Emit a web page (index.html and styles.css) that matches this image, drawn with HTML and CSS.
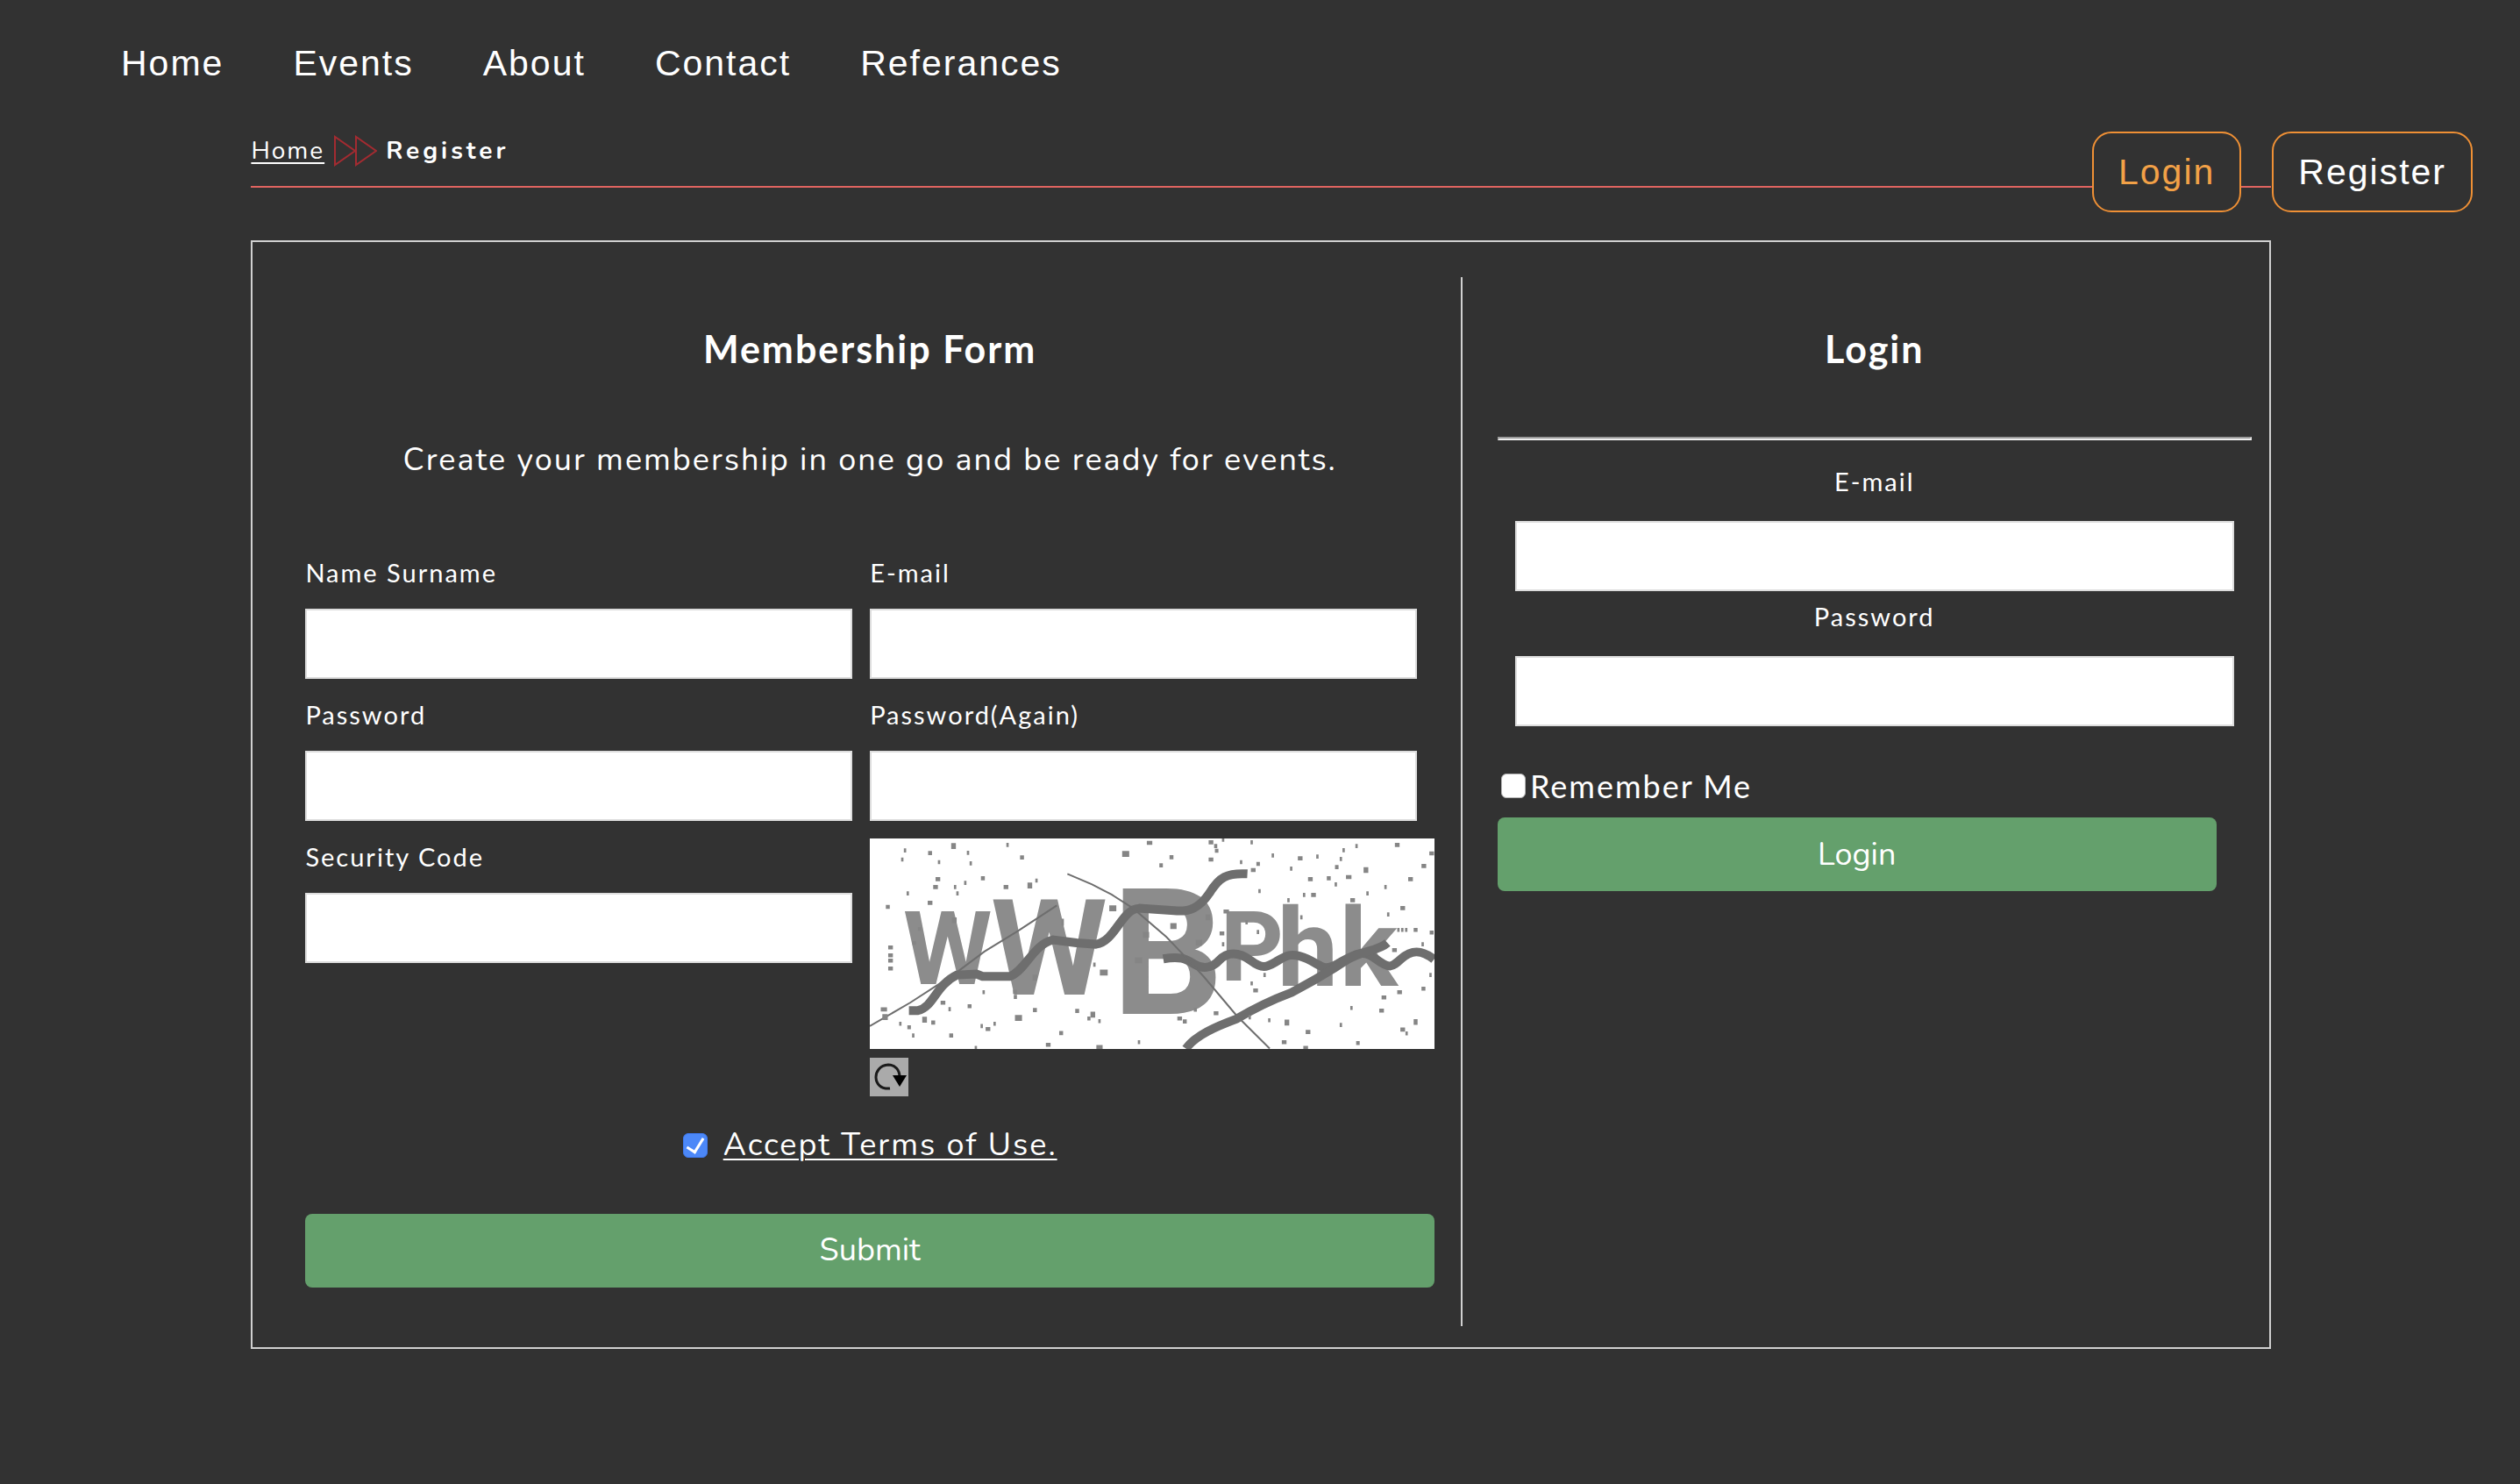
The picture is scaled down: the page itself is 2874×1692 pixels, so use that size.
FILE: index.html
```html
<!DOCTYPE html>
<html lang="en">
<head>
<meta charset="utf-8">
<title>Register</title>
<link rel="stylesheet" href="styles.css">
</head>
<body>
<header class="site-header">
  <nav class="main-nav">
    <a href="#">Home</a>
    <a href="#">Events</a>
    <a href="#">About</a>
    <a href="#">Contact</a>
    <a href="#">Referances</a>
  </nav>
  <div class="account-links">
    <a class="account-link account-link-active" href="#">Login</a>
    <a class="account-link" href="#">Register</a>
  </div>
</header>

<main class="page">
  <div class="breadcrumb">
    <a href="#">Home</a>
    <svg class="breadcrumb-arrow" viewBox="0 0 50 36" aria-hidden="true"><path d="M2 2V34L25 18ZM26 2V34L49 18Z"/></svg>
    <strong>Register</strong>
  </div>

  <div class="panel">
    <form class="membership">
      <h2 class="title">Membership Form</h2>
      <p class="intro">Create your membership in one go and be ready for events.</p>
      <div class="fields">
        <div class="field">
          <label for="name">Name Surname</label>
          <input class="text-box" id="name" type="text">
        </div>
        <div class="field">
          <label for="email">E-mail</label>
          <input class="text-box" id="email" type="email">
        </div>
        <div class="field">
          <label for="password">Password</label>
          <input class="text-box" id="password" type="password">
        </div>
        <div class="field">
          <label for="password2">Password(Again)</label>
          <input class="text-box" id="password2" type="password">
        </div>
        <div class="field">
          <label for="code">Security Code</label>
          <input class="text-box" id="code" type="text">
        </div>
        <div class="security">
          <svg class="captcha" viewBox="0 0 644 240" role="img" aria-label="Security code">
            <g class="captcha-text">
              <text x="38" y="166" font-size="116">W</text>
              <text x="138" y="178" font-size="152">W</text>
              <text x="276" y="200" font-size="200">B</text>
              <text x="400" y="162" font-size="112">P</text>
              <text x="465" y="168" font-size="124">h</text>
              <text x="536" y="168" font-size="124">k</text>
            </g>
            <g transform="scale(.4464 .3333) translate(-72 -78)">
              <path class="wave" d="M172 667H195C235 655 240 580 295 545L345 542 360 550H430C470 530 490 440 540 425L600 435 650 440C700 430 715 320 760 317L850 325C890 330 915 315 940 265C965 210 985 195 1037 199"/>
              <path class="wave" d="M822 490C865 480 880 490 900 507S945 525 965 495 1015 465 1045 495 1085 520 1110 500 1150 465 1190 490 1230 535 1270 505 1330 455 1365 490 1405 520 1430 490 1480 455 1514 492"/>
              <path class="wave" d="M880 797C905 750 960 720 1010 695C1060 655 1100 630 1150 605C1200 570 1250 530 1290 495S1370 465 1395 435"/>
              <path class="scratch" d="M72 720L175 640 250 575 300 530 365 465 450 395 550 307M577 199L640 235 690 270 745 317 830 415 880 485 925 550 1010 685 1094 797"/>
              <path class="specks big" d="M280 104h12M717 131h18M475 239h12M684 317h18M1334 186h12M206 698h12M1132 708h12M750 495h18M660 537h20M443 692h18M840 378h16M636 681h12M905 435h16M770 408h16M488 554h12M282 358h12M930 348h12M1462 706h10M104 689h14"/>
              <path class="specks" d="M159 119h6M152 150h6M221 128h10M246 159h6M320 127h6M327 163h6M421 100h6M456 143h10M240 217h12M234 244h12M287 244h6M313 230h6M356 214h10M414 244h12M495 222h6M166 266h6M293 266h6M113 312h10M220 298h12M780 93h14M838 142h10M812 170h9M938 91h12M952 104h8M954 120h9M938 150h12M972 82h6M1045 91h6M1018 159h6M1060 165h9M1046 186h12M1099 136h6M1166 146h12M1213 140h6M1146 181h6M1280 118h6M1313 104h6M1273 148h6M1261 176h9M1414 100h12M1502 129h12M1482 172h12M1192 217h12M1240 214h10M1289 210h14M1260 235h6M1387 244h6M1448 217h12M1065 258h6M1139 289h6M1179 271h6M1200 271h12M1341 266h6M1300 289h12M1428 316h12M1394 338h6M1172 348h6M119 451h12M119 478h12M119 496h12M119 523h12M181 436h9M195 388h8M562 360h6M562 370h6M643 510h6M976 328h14M966 403h12M972 440h6M1032 365h6M1061 398h6M1503 400h10M1420 391h6M1430 391h6M1440 391h6M1462 391h10M1407 460h12M1482 440h6M1502 545h6M1482 592h10M1420 604h12M1380 622h12M1374 667h12M1300 658h6M1078 545h6M1052 598h12M1045 574h6M1090 700h6M1186 740h12M1125 775h12M1180 795h12M1273 716h6M1315 778h9M1428 732h12M1441 745h6M440 620h8M438 603h10M360 604h6M253 640h12M322 652h10M100 663h16M147 712h6M168 724h9M229 708h10M180 752h6M273 662h6M275 752h10M355 720h6M368 730h12M388 712h6M489 665h10M597 668h10M628 694h8M656 703h6M556 744h10M522 784h12M651 792h16M757 775h6M858 694h12M872 704h10M951 676h12M1040 690h6M900 664h8M340 795h6"/>
            </g>
          </svg>
          <button class="refresh" type="button" aria-label="New security code">
            <svg viewBox="0 0 44 44" aria-hidden="true"><path class="refresh-arc" d="M23 35C2 37 2 9 21 8C29 8 34 14 34 22"/><path d="M26 20H42L34 33Z"/></svg>
          </button>
        </div>
      </div>
      <div class="terms">
        <input class="tick" id="terms" type="checkbox" aria-label="Accept Terms of Use" checked>
        <a href="#">Accept Terms of Use.</a>
      </div>
      <button class="action" type="submit">Submit</button>
    </form>

    <form class="login">
      <h2 class="title">Login</h2>
      <hr class="rule">
      <div class="login-field">
        <label for="login-email">E-mail</label>
        <input class="text-box" id="login-email" type="email">
      </div>
      <div class="login-field">
        <label for="login-password">Password</label>
        <input class="text-box" id="login-password" type="password">
      </div>
      <div class="remember">
        <input class="tick" id="remember" type="checkbox">
        <label for="remember">Remember Me</label>
      </div>
      <button class="action login-action" type="submit">Login</button>
    </form>
  </div>
</main>
</body>
</html>
```

FILE: styles.css
```css
* {
  box-sizing: border-box;
}

body {
  margin: 0;
  background: #323232;
  color: #fff;
  font-family: Nunito, Lato, sans-serif;
  font-size: 36px;
  line-height: 48px;
  letter-spacing: 2px;
}

a {
  color: inherit;
}

.site-header {
  padding: 48px 54px 0 138px;
  font-family: "Liberation Sans", Arial, sans-serif;
  font-size: 41px;
}

.main-nav {
  display: flex;
  flex-wrap: wrap;
  gap: 0 79px;
}

.main-nav a,
.account-link {
  text-decoration: none;
}

/* The account links float over the breadcrumb line. */
.account-links {
  position: absolute;
  top: 150px;
  right: 54px;
  display: flex;
  gap: 35px;
}

.account-link {
  padding: 20px 28px;
  border: 2px solid #ef9035;
  border-radius: 22px;
  background: #323232;
}

.account-link-active {
  color: #f2a147;
}

.page {
  width: calc(80% + 4px);
  margin-left: calc(10% - 1px);
}

.breadcrumb {
  display: flex;
  align-items: center;
  gap: 10px;
  margin-top: 52px;
  padding-bottom: 16px;
  border-bottom: 2px solid #e06460;
  font-size: 28px;
}

.breadcrumb strong {
  letter-spacing: 4px;
}

.breadcrumb-arrow {
  width: 50px;
  height: 36px;
  fill: none;
  stroke: #a32b31;
  stroke-width: 2;
}

.panel {
  display: flex;
  margin-top: 60px;
  padding: 40px 0 24px;
  border: 2px solid #d0d0d0;
}

.membership {
  width: 60%;
  padding: 52px 30px 44px 60px;
  border-right: 2px solid #d0d0d0;
}

.login {
  width: 40%;
  padding: 52px 20px 0 40px;
}

.title {
  margin: 0;
  font-family: Lato, sans-serif;
  font-size: 43px;
  line-height: 60px;
  text-align: center;
}

.intro {
  margin: 73px 0 83px;
  text-align: center;
}

.fields {
  display: grid;
  grid-template-columns: 1fr 1fr;
  row-gap: 20px;
}

.field {
  display: flex;
  flex-direction: column;
  gap: 20px;
  padding-right: 20px;
}

.field label,
.login-field label {
  font-family: Lato, sans-serif;
  font-size: 29px;
  line-height: 42px;
}

.text-box {
  width: 100%;
  height: 80px;
  padding: 0 20px;
  border: 2px solid #ddd;
  background: #fff;
  font: inherit;
}

.security {
  display: flex;
  flex-direction: column;
  align-items: flex-start;
  gap: 10px;
}

.captcha {
  display: block;
  width: 100%;
  background: #fff;
}

.captcha-text {
  fill: #8c8c8c;
  font-family: Roboto, "Liberation Sans", sans-serif;
  font-weight: 700;
  letter-spacing: 0;
}

.wave,
.scratch,
.specks {
  fill: none;
  stroke: #6e6e6e;
}

.wave {
  stroke-width: 10;
  vector-effect: non-scaling-stroke;
}

.scratch {
  stroke-width: 2;
  vector-effect: non-scaling-stroke;
}

.specks {
  stroke: #858585;
  stroke-width: 14;
}

.big {
  stroke-width: 20;
}

.refresh {
  width: 44px;
  height: 44px;
  padding: 0;
  border: 0;
  background: #aaa;
}

.refresh svg {
  display: block;
}

.refresh-arc {
  fill: none;
  stroke: #1a1a1a;
  stroke-width: 3;
}

.terms {
  display: flex;
  justify-content: center;
  align-items: center;
  gap: 18px;
  margin: 32px 0 54px;
}

.terms a,
.breadcrumb a {
  text-underline-offset: 4px;
  text-decoration-thickness: 2px;
}

.tick {
  appearance: none;
  display: grid;
  place-items: center;
  width: 28px;
  height: 28px;
  margin: 0;
  border: 1px solid #b5b5b5;
  border-radius: 6px;
  background: #fff;
}

.tick:checked {
  border-color: #3f7af0;
  background: #4c88f8;
}

.tick:checked::after {
  content: "";
  width: 9px;
  height: 17px;
  margin-bottom: 4px;
  border: solid #fff;
  border-width: 0 3px 3px 0;
  transform: rotate(32deg);
}

.action {
  display: block;
  width: 100%;
  height: 84px;
  border: 0;
  border-radius: 8px;
  background: #64a06c;
  color: #fff;
  font-family: inherit;
  font-size: 36px;
}

.rule {
  margin: 70px 0 18px;
  border: 2px solid;
  border-color: #9a9a9a #eee #eee #9a9a9a;
}

.login-field {
  display: flex;
  flex-direction: column;
  gap: 24px;
  padding: 8px 20px 0;
  text-align: center;
}

.remember {
  display: flex;
  align-items: center;
  gap: 5px;
  margin: 44px 0 12px;
  padding-left: 4px;
  font-family: Lato, sans-serif;
}

.login-action {
  width: calc(100% - 40px);
}
```
